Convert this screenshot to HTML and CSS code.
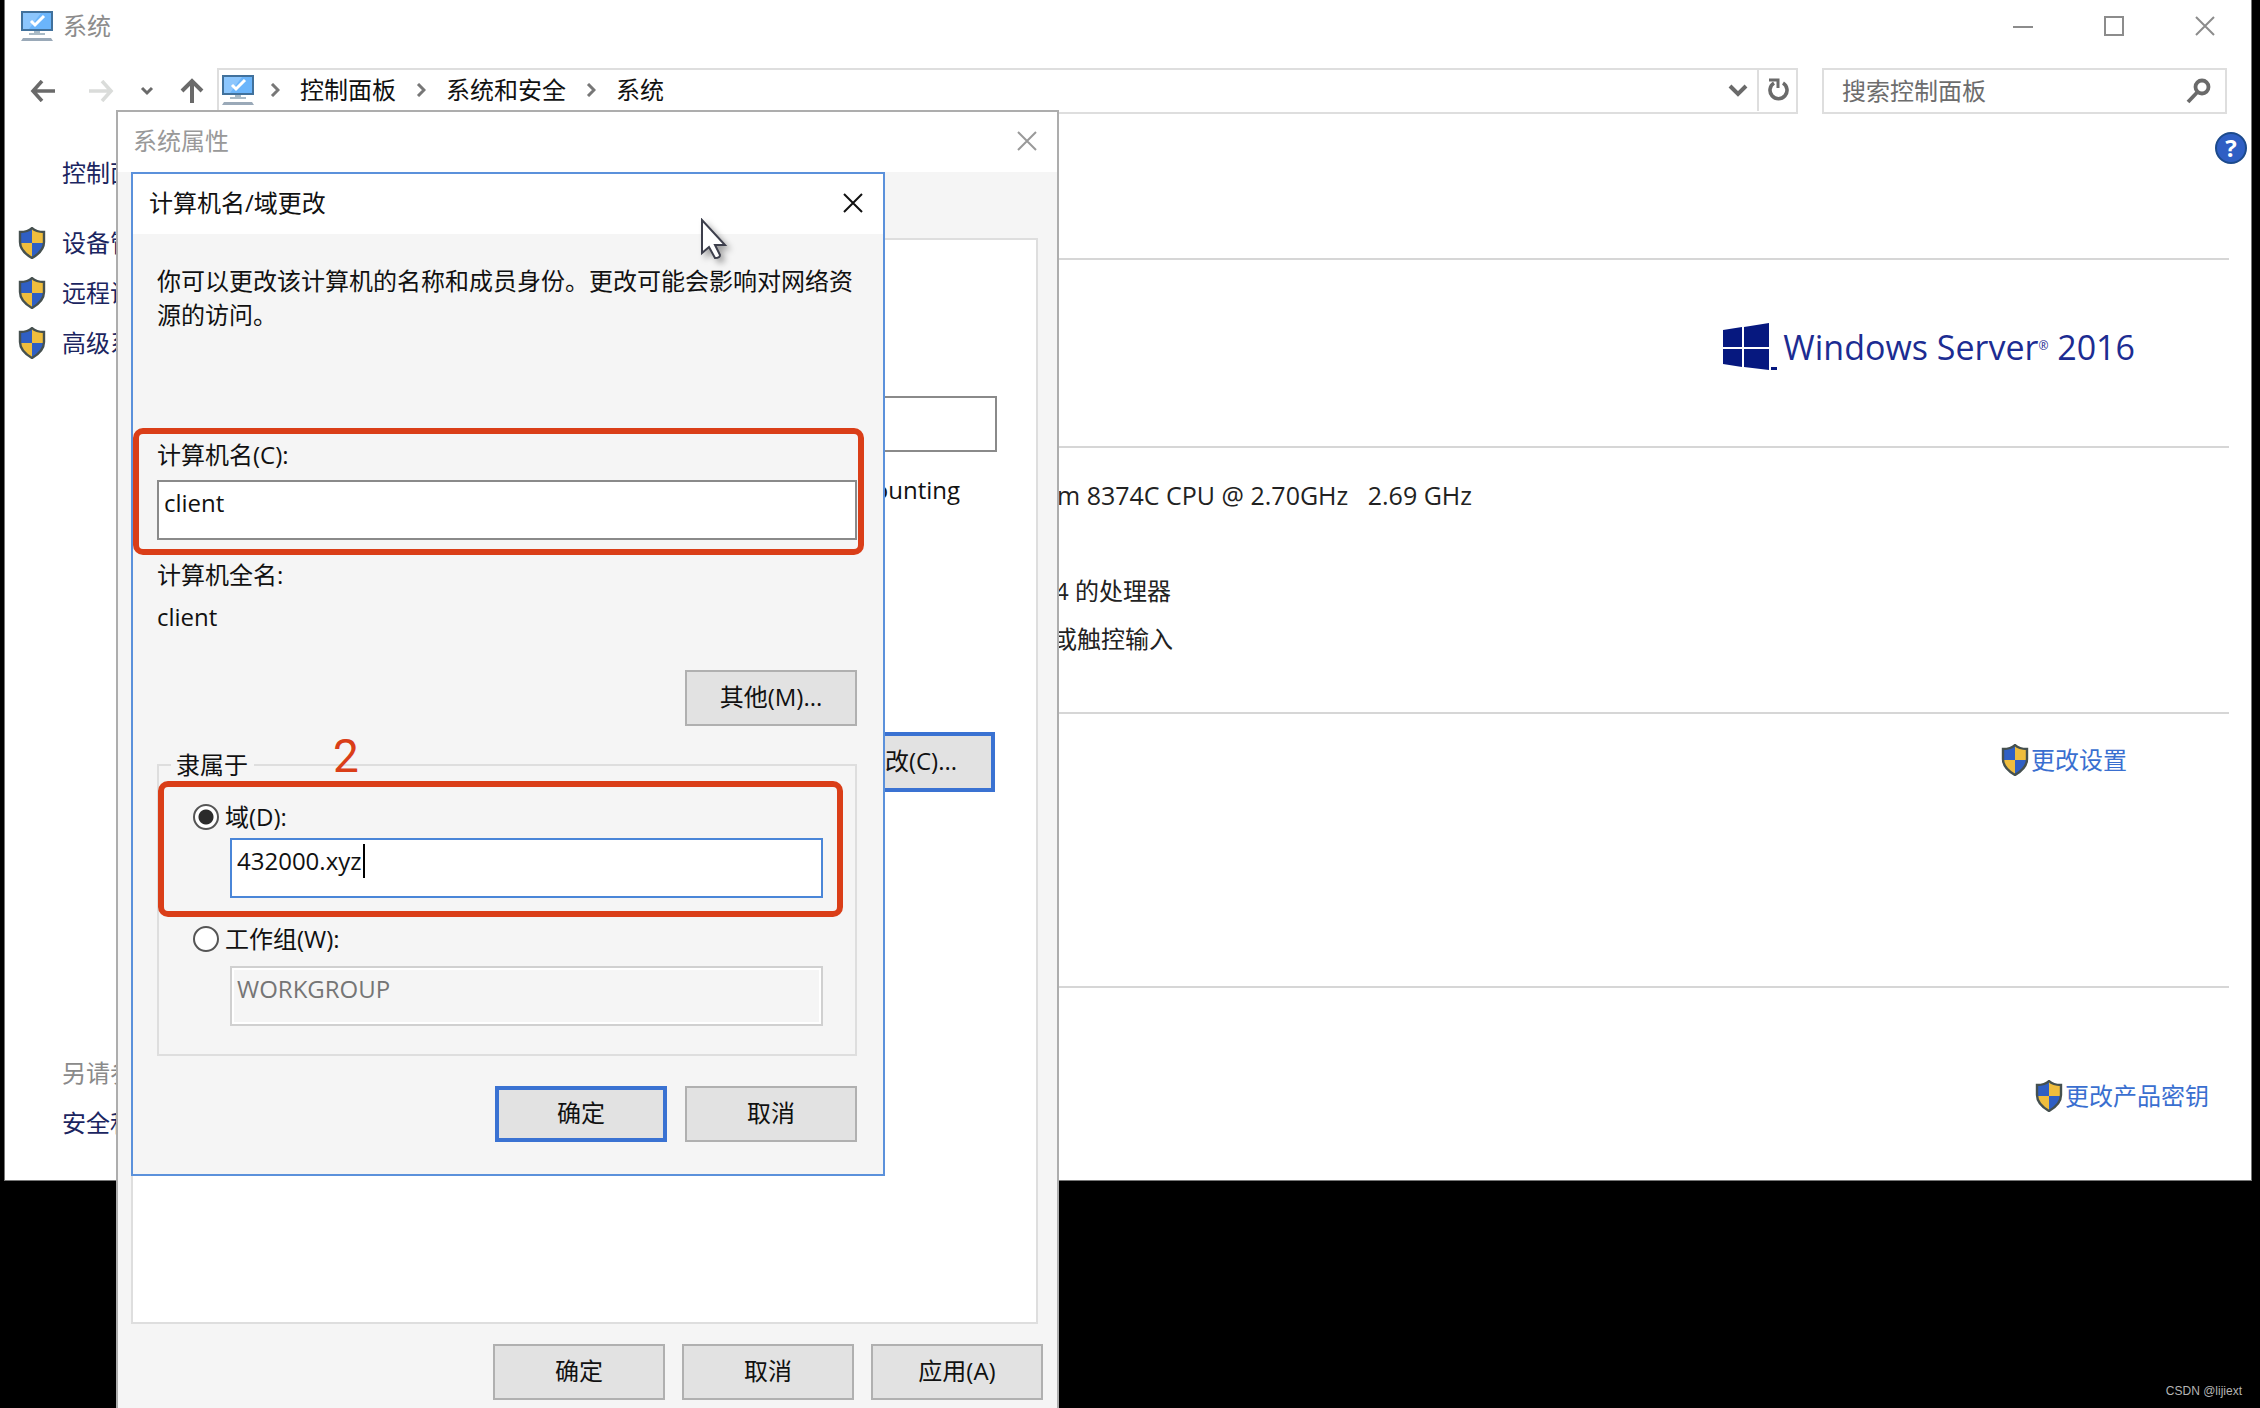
FILE: index.html
```html
<!DOCTYPE html>
<html lang="zh-CN">
<head>
<meta charset="utf-8">
<title>系统</title>
<link rel="stylesheet" href="styles.css">
</head>
<body>
<svg class="sprite" aria-hidden="true">
  <symbol id="pc" viewBox="0 0 32 30">
    <rect x="1" y="1" width="30" height="18" fill="#6bb5fb" stroke="#41719c" stroke-width="2"/>
    <path d="M2 2h18L8 18H2z" fill="#8cc6fd"/>
    <path d="M10 10l4 4 9-9" fill="none" stroke="#fff" stroke-width="3"/>
    <path d="M13 20h6v2h5v2H8v-2h5z" fill="#a9bac6"/>
    <path d="M2 27h28l2 3H0z" fill="#9aa9b8"/>
  </symbol>
  <symbol id="shield" viewBox="0 0 28 32">
    <path d="M14 1c3 3 8 4 12 4v10c0 7-5 12-12 16C7 27 2 22 2 15V5c4 0 9-1 12-4z" fill="#2f5fc4"/>
    <path d="M14 1c3 3 8 4 12 4v11H14z" fill="#efbd3d"/>
    <path d="M2 16h12v15C7 27 2.500 23 2 16z" fill="#efbd3d"/>
    <path d="M14 1c3 3 8 4 12 4v10c0 7-5 12-12 16C7 27 2 22 2 15V5c4 0 9-1 12-4z" fill="none" stroke="#45504f" stroke-width="2.400"/>
  </symbol>
  <symbol id="x" viewBox="0 0 20 20"><path d="M1 1l18 18M19 1L1 19" fill="none" stroke="currentColor" stroke-width="2"/></symbol>
  <symbol id="crumb" viewBox="0 0 10 14"><path d="M2 1l6 6-6 6" fill="none" stroke="currentColor" stroke-width="3"/></symbol>
  <symbol id="arrow" viewBox="0 0 26 22"><path d="M25 11H3M12 1L3 11l9 10" fill="none" stroke="currentColor" stroke-width="3.600"/></symbol>
</svg>

<div class="desktop">
  <main class="window">
    <header class="titlebar">
      <svg class="pc"><use href="#pc"/></svg>
      <span class="title">系统</span>
      <div class="caption-buttons">
        <button type="button" aria-label="最小化"><svg width="20" height="20"><path d="M0 11h20" stroke="currentColor" stroke-width="2"/></svg></button>
        <button type="button" aria-label="最大化"><svg width="20" height="20"><path d="M1 1h18v18H1z" fill="none" stroke="currentColor" stroke-width="2"/></svg></button>
        <button type="button" aria-label="关闭"><svg width="20" height="20"><use href="#x"/></svg></button>
      </div>
    </header>

    <nav class="navbar">
      <div class="history">
        <button type="button" aria-label="后退"><svg width="26" height="22"><use href="#arrow"/></svg></button>
        <button type="button" class="off" aria-label="前进"><svg class="flip" width="26" height="22"><use href="#arrow"/></svg></button>
        <button type="button" aria-label="最近位置"><svg width="14" height="10"><path d="M2 2l5 5 5-5" fill="none" stroke="currentColor" stroke-width="3"/></svg></button>
        <button type="button" aria-label="上移"><svg width="24" height="26"><path d="M12 25V3M2 13L12 3l10 10" fill="none" stroke="currentColor" stroke-width="4"/></svg></button>
      </div>
      <div class="address">
        <svg class="pc"><use href="#pc"/></svg>
        <svg class="sep"><use href="#crumb"/></svg>
        <a href="#">控制面板</a>
        <svg class="sep"><use href="#crumb"/></svg>
        <a href="#">系统和安全</a>
        <svg class="sep"><use href="#crumb"/></svg>
        <a href="#">系统</a>
        <button type="button" class="drop" aria-label="展开"><svg width="20" height="14"><path d="M2 3l8 8 8-8" fill="none" stroke="currentColor" stroke-width="4"/></svg></button>
        <button type="button" class="refresh" aria-label="刷新"><svg width="24" height="24"><path d="M17 5a8.500 8.500 0 1 1-9 0" fill="none" stroke="currentColor" stroke-width="3.600"/><path d="M3 2h9v8" fill="none" stroke="currentColor" stroke-width="3"/></svg></button>
      </div>
      <div class="search">
        <input type="text" aria-label="搜索控制面板" placeholder="搜索控制面板">
        <svg width="26" height="26"><circle cx="17" cy="9" r="6.500" fill="none" stroke="#6a6a6a" stroke-width="3.800"/><path d="M12.500 14L3 24" stroke="#6a6a6a" stroke-width="3.800"/></svg>
      </div>
    </nav>

    <div class="content">
      <aside class="sidebar">
        <a href="#" class="home">控制面</a>
        <a href="#"><svg class="shield"><use href="#shield"/></svg>设备管</a>
        <a href="#"><svg class="shield"><use href="#shield"/></svg>远程设</a>
        <a href="#"><svg class="shield"><use href="#shield"/></svg>高级系</a>
        <div class="see-also">
          <span>另请参</span>
          <a href="#">安全和</a>
        </div>
      </aside>
      <div class="details">
        <section class="intro"><button type="button" class="help" aria-label="帮助">?</button></section>
        <section class="brand">
          <svg width="54" height="48" viewBox="0 0 54 48"><path fill="#06187f" d="M0 7l19-3v20H0zM21 4l25-4v24H21zM0 26h19v18L0 41zM21 26h25v21l-25-3zM48 44h6v3h-6z"/></svg>
          <span>Windows Server<sup>®</sup> 2016</span>
        </section>
        <section class="specs">
          <p class="cpu">m 8374C CPU @ 2.70GHz &nbsp; 2.69 GHz</p>
          <p class="type">4 的处理器</p>
          <p class="touch">或触控输入</p>
        </section>
        <section class="settings"><a href="#"><svg class="shield"><use href="#shield"/></svg>更改设置</a></section>
        <section class="activation"><a href="#"><svg class="shield"><use href="#shield"/></svg>更改产品密钥</a></section>
      </div>
    </div>
  </main>

  <div class="dialog properties" role="dialog" aria-labelledby="props-title">
    <header class="dialog-title">
      <span id="props-title">系统属性</span>
      <button type="button" aria-label="关闭"><svg width="20" height="20"><use href="#x"/></svg></button>
    </header>
    <div class="tab-panel">
      <input type="text" class="field" aria-label="计算机描述">
      <p>ounting</p>
      <button type="button" class="btn primary">更改(C)...</button>
    </div>
    <footer class="actions">
      <button type="button" class="btn">确定</button>
      <button type="button" class="btn">取消</button>
      <button type="button" class="btn">应用(A)</button>
    </footer>
  </div>

  <form class="dialog rename" role="dialog" aria-labelledby="rename-title">
    <header class="dialog-title">
      <span id="rename-title">计算机名/域更改</span>
      <button type="button" aria-label="关闭"><svg width="20" height="20"><use href="#x"/></svg></button>
    </header>
    <div class="rename-body">
      <p>你可以更改该计算机的名称和成员身份。更改可能会影响对网络资源的访问。</p>
      <label class="name-label" for="name">计算机名(C):</label>
      <input type="text" id="name" class="field" value="client">
      <p class="full-label">计算机全名:</p>
      <p class="full-name">client</p>
      <button type="button" class="btn more">其他(M)...</button>
      <fieldset>
        <legend>隶属于</legend>
        <label class="choice"><input type="radio" name="member" checked>域(D):</label>
        <div class="edit">
          <input type="text" class="field active" aria-label="域" value="432000.xyz">
          <i class="caret"></i>
        </div>
        <label class="choice second"><input type="radio" name="member">工作组(W):</label>
        <div class="edit group">
          <input type="text" class="field" aria-label="工作组" value="WORKGROUP" disabled>
        </div>
      </fieldset>
      <footer class="actions">
        <button type="button" class="btn primary">确定</button>
        <button type="button" class="btn">取消</button>
      </footer>
    </div>
    <div class="mark mark-name"></div>
    <div class="mark mark-domain"></div>
    <span class="mark-number">2</span>
  </form>

  <svg class="pointer" viewBox="0 0 30 44"><path d="M2 2v33l7-6 6 11c3 0 5-1 5-3l-5-10h10z" fill="#fff" stroke="#3d3f4c" stroke-width="2"/></svg>
  <span class="watermark">CSDN @lijiext</span>
</div>
</body>
</html>
```
FILE: styles.css
```css
* { box-sizing: border-box; }

body {
  margin: 0;
  background: #000;
  color: #111;
  font: 24px/34px "Open Sans", "Noto Sans CJK SC", sans-serif;
}

p { margin: 0; }
a { color: inherit; text-decoration: none; }
input, button { font: inherit; color: inherit; }
button { padding: 0; border: 0; background: none; }
svg { display: block; flex: none; }
.sprite { position: absolute; width: 0; height: 0; }

.desktop {
  position: relative;
  min-height: 100vh;
  overflow: hidden;
}

/* System window */
.window {
  margin: 0 8px 0 4px;
  border: 1px solid #777;
  border-top: 0;
  background: #fff;
}

.pc { width: 32px; height: 30px; }
.shield { width: 28px; height: 32px; }

.titlebar {
  display: flex;
  align-items: center;
  height: 54px;
  padding: 0 36px 2px 16px;
  color: #8c8c8c;
}
.titlebar .title { margin-left: 10px; }
.caption-buttons { display: flex; gap: 71px; margin-left: auto; }

.navbar {
  display: flex;
  margin-top: 14px;
  padding-right: 24px;
}
.history {
  display: flex;
  align-items: center;
  gap: 26px;
  width: 212px;
  padding-left: 25px;
  color: #6a6a6a;
}
.history button:nth-child(2) { margin-left: 6px; }
.history .off { color: #dadcda; }
.flip { transform: scaleX(-1); }

.address {
  display: flex;
  align-items: center;
  flex: 1;
  height: 46px;
  padding: 0 0 2px 3px;
  border: 2px solid #dedede;
  color: #111;
}
.sep { width: 10px; height: 14px; margin: 0 20px; color: #777; }
.address .pc + .sep { margin-left: 16px; }
.drop, .refresh {
  display: flex;
  align-items: center;
  justify-content: center;
  height: 42px;
  color: #6a6a6a;
}
.drop { width: 38px; margin-left: auto; }
.refresh { width: 39px; border-left: 2px solid #dedede; }

.search {
  display: flex;
  align-items: center;
  width: 405px;
  margin-left: 24px;
  padding: 0 14px 0 18px;
  border: 2px solid #dedede;
}
.search input {
  flex: 1;
  min-width: 0;
  padding: 0;
  border: 0;
  outline: 0;
}
.search input::placeholder { color: #6d6d6d; opacity: 1; }

.content { display: grid; grid-template-columns: 300px 1fr; }

.sidebar {
  display: flex;
  flex-direction: column;
  gap: 16px;
  padding: 42px 0 40px 13px;
  color: #1b2560;
}
.sidebar a { display: flex; align-items: center; gap: 16px; height: 34px; }
.sidebar .home { margin: 0 0 20px 44px; }
.see-also {
  display: flex;
  flex-direction: column;
  gap: 16px;
  margin: auto 0 0 44px;
}
.see-also span { color: #8a8a8a; }

.details { padding-right: 22px; }
.details section { border-bottom: 2px solid #d6d6d6; }
.details section:last-child { border-bottom: 0; }

.intro {
  display: flex;
  justify-content: flex-end;
  padding: 18px 0 94px;
}
.help {
  width: 32px;
  height: 32px;
  margin-right: -18px;
  border: 2px solid #1c4a8c;
  border-radius: 50%;
  background: #2f5fc4;
  color: #fff;
  font-weight: 700;
  line-height: 28px;
}

.brand {
  display: flex;
  align-items: center;
  justify-content: flex-end;
  gap: 6px;
  padding: 56px 94px 68px;
  color: #1c2c92;
  font-size: 34px;
  line-height: 62px;
}
.brand sup { font-size: 12px; line-height: 0; vertical-align: 10px; }

.specs { padding: 30px 0 56px 752px; color: #222; }
.specs .cpu { font-size: 25px; }
.specs .type { margin: 62px 0 0 -2px; }
.specs .touch { margin: 14px 0 0 -4px; }

.settings, .activation { display: flex; justify-content: flex-end; color: #3a6fd0; }
.settings { padding: 29px 102px 209px 0; }
.activation { padding: 91px 20px 67px 0; }
.settings a, .activation a { display: flex; align-items: center; gap: 2px; }

/* Dialogs */
.dialog { position: absolute; background: #f5f5f5; }

.dialog-title {
  display: flex;
  align-items: center;
  justify-content: space-between;
  height: 60px;
  padding: 0 20px 3px 16px;
  background: #fff;
}

.field {
  display: block;
  width: 100%;
  height: 60px;
  padding: 0 5px 15px;
  border: 2px solid #8a8a8a;
  border-radius: 0;
  outline: 0;
  background: #fff;
}
.field.active { border-color: #4a86d8; }
.field:disabled {
  border-color: #d0d0d0;
  background: #f5f5f5;
  box-shadow: inset 0 0 0 2px #fff;
  color: #757575;
}

.btn {
  width: 172px;
  height: 56px;
  padding-bottom: 2px;
  border: 2px solid #b0b0b0;
  background: #e2e2e2;
}
.btn.primary { border: 4px solid #3a72d2; }
.actions { display: flex; justify-content: flex-end; }

.properties {
  left: 116px;
  top: 110px;
  width: 943px;
  border: 2px solid #adadad;
  border-bottom: 0;
}
.properties .dialog-title { padding-left: 15px; color: #999; }
.tab-panel {
  display: flex;
  flex-direction: column;
  align-items: flex-end;
  height: 1086px;
  margin: 66px 19px 0 13px;
  padding: 156px 39px 0;
  border: 2px solid #dedede;
  background: #fff;
}
.tab-panel .field { width: 560px; height: 56px; }
.tab-panel p { margin: 21px 37px 0 0; }
.tab-panel .btn { height: 60px; margin: 225px 2px 0 0; }
.properties .actions { gap: 17px; padding: 20px 14px 8px; }

.rename {
  left: 131px;
  top: 172px;
  width: 754px;
  border: 2px solid #5b91db;
}
.rename-body { padding: 30px 26px 32px 24px; }
.name-label { display: block; margin: 106px 0 8px; }
.full-label { margin: 18px 0 8px; }
.btn.more { display: block; margin: 36px 0 22px auto; }

fieldset {
  min-width: 0;
  margin: 0;
  padding: 18px 32px 28px 12px;
  border: 2px solid #dedede;
}
legend { padding: 0 6px 0 5px; }
.choice { display: flex; align-items: center; gap: 6px; margin-left: 22px; }
.choice.second { margin-top: 24px; }
.choice input {
  appearance: none;
  width: 26px;
  height: 26px;
  margin: 0;
  border: 2px solid #555;
  border-radius: 50%;
  background: #fff;
}
.choice input:checked { background: radial-gradient(circle, #2b2b2b 7px, #fff 8px); }
.edit { position: relative; margin: 4px 0 0 59px; }
.edit.group { margin-top: 10px; }
.caret {
  position: absolute;
  left: 133px;
  top: 6px;
  width: 2px;
  height: 34px;
  background: #000;
}
.rename .actions { gap: 18px; margin-top: 30px; }

/* Red highlights drawn over the dialog */
.mark {
  position: absolute;
  border: 6px solid #da3e18;
  border-radius: 10px;
  pointer-events: none;
}
.mark-name { left: 0; top: 254px; width: 731px; height: 127px; }
.mark-domain { left: 25px; top: 607px; width: 685px; height: 136px; }
.mark-number {
  position: absolute;
  left: 200px;
  top: 556px;
  color: #da3e18;
  font: 46px/52px Roboto, sans-serif;
}

.pointer {
  position: absolute;
  left: 700px;
  top: 218px;
  width: 30px;
  height: 44px;
  filter: drop-shadow(4px 4px 3px rgba(0, 0, 0, .35));
}

.watermark {
  position: absolute;
  right: 18px;
  bottom: 8px;
  color: #b4b4b4;
  font: 12px/18px "Liberation Sans", sans-serif;
}
```
